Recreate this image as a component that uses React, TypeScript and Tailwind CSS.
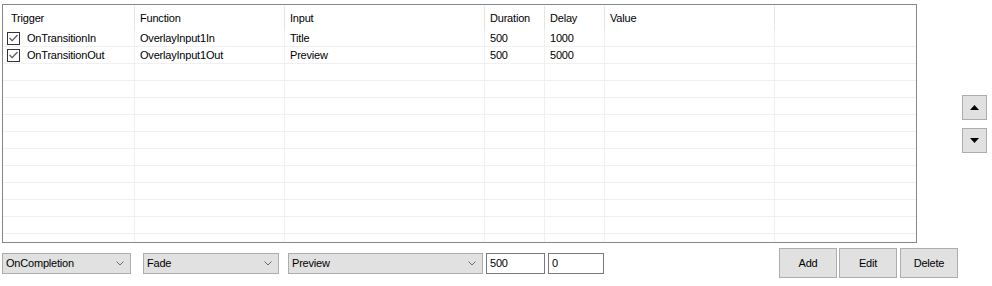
import React from "react";

type Col = { key: string; label: string; width: number };

const columns: Col[] = [
  { key: "trigger", label: "Trigger", width: 132 },
  { key: "fn", label: "Function", width: 150 },
  { key: "input", label: "Input", width: 200 },
  { key: "duration", label: "Duration", width: 60 },
  { key: "delay", label: "Delay", width: 60 },
  { key: "value", label: "Value", width: 170 },
];

type Row = {
  checked: boolean;
  trigger: string;
  fn: string;
  input: string;
  duration: string;
  delay: string;
  value: string;
};

const rows: Row[] = [
  { checked: true, trigger: "OnTransitionIn", fn: "OverlayInput1In", input: "Title", duration: "500", delay: "1000", value: "" },
  { checked: true, trigger: "OnTransitionOut", fn: "OverlayInput1Out", input: "Preview", duration: "500", delay: "5000", value: "" },
];

const EMPTY_ROWS = 11;

function Check() {
  return (
    <span className="grid size-[13px] shrink-0 place-items-center border border-[#333333] bg-white">
      <svg width="9" height="8" viewBox="0 0 9 8" aria-hidden>
        <path d="M0.5 4 L3.2 6.6 L8.5 1" fill="none" stroke="#5a5a5a" strokeWidth="1.3" />
      </svg>
    </span>
  );
}

function Chevron() {
  return (
    <svg width="8" height="5" viewBox="0 0 8 5" aria-hidden>
      <path d="M0.5 0.5 L4 4 L7.5 0.5" fill="none" stroke="#6b6b6b" strokeWidth="1" />
    </svg>
  );
}

function Combo({ label, width }: { label: string; width: number }) {
  return (
    <div
      className="flex h-[21px] items-center justify-between border border-[#adadad] bg-[#e1e1e1] pl-[3px] pr-[6px] text-black"
      style={{ width }}
    >
      <span>{label}</span>
      <Chevron />
    </div>
  );
}

function TextBox({ value, width }: { value: string; width: number }) {
  return (
    <div
      className="flex h-[21px] items-center border border-[#7a7a7a] bg-white pl-[3px] text-black"
      style={{ width }}
    >
      {value}
    </div>
  );
}

function Button({ children, width }: { children: React.ReactNode; width: number }) {
  return (
    <button
      type="button"
      className="grid h-[30px] place-items-center border border-[#adadad] bg-[#e1e1e1] text-black"
      style={{ width }}
    >
      {children}
    </button>
  );
}

function ArrowButton({ up }: { up?: boolean }) {
  return (
    <button
      type="button"
      className="grid size-[25px] place-items-center border border-[#adadad] bg-[#e1e1e1]"
    >
      <svg width="9" height="5" viewBox="0 0 9 5" aria-hidden>
        {up ? <path d="M0 5 L4.5 0 L9 5 Z" fill="#000" /> : <path d="M0 0 L9 0 L4.5 5 Z" fill="#000" />}
      </svg>
    </button>
  );
}

export default function App() {
  return (
    <div
      className="h-[286px] w-[992px] overflow-hidden bg-white text-[11px] leading-none tracking-[-0.2px] text-black"
      style={{ fontFamily: '"Liberation Sans", Arial, sans-serif' }}
    >
      <div className="flex pt-[4px]">
        <div className="ml-[2px] h-[239px] w-[915px] overflow-hidden border border-[#828790] bg-white">
          <div className="flex h-[25px]">
            {columns.map((c, i) => (
              <div
                key={c.key}
                className={`flex shrink-0 items-center border-r border-[#e5e5e5] ${i === 0 ? "pl-[8px]" : "pl-[5px]"}`}
                style={{ width: c.width, marginTop: 1 }}
              >
                {c.label}
              </div>
            ))}
            <div className="flex-1" />
          </div>
          {rows.map((r, idx) => (
            <div key={idx} className="flex h-[17px] border-b border-[#f0f0f0]">
              <div className="flex shrink-0 items-center gap-[7px] border-r border-[#f0f0f0] pl-[4px]" style={{ width: 132 }}>
                <Check />
                <span>{r.trigger}</span>
              </div>
              {columns.slice(1).map((c) => (
                <div
                  key={c.key}
                  className="flex shrink-0 items-center border-r border-[#f0f0f0] pl-[5px]"
                  style={{ width: c.width }}
                >
                  {r[c.key as keyof Row] as string}
                </div>
              ))}
              <div className="flex-1" />
            </div>
          ))}
          {Array.from({ length: EMPTY_ROWS }).map((_, idx) => (
            <div key={idx} className="flex h-[17px] border-b border-[#f0f0f0]">
              {columns.map((c) => (
                <div key={c.key} className="shrink-0 border-r border-[#f0f0f0]" style={{ width: c.width }} />
              ))}
              <div className="flex-1" />
            </div>
          ))}
        </div>
        <div className="ml-[45px] flex flex-col gap-[8px] pt-[91px]">
          <ArrowButton up />
          <ArrowButton />
        </div>
      </div>

      <div className="mt-[5px] flex items-start">
        <div className="ml-[2px] mt-[5px] flex items-center">
          <Combo label="OnCompletion" width={129} />
          <div className="ml-[12px]">
            <Combo label="Fade" width={136} />
          </div>
          <div className="ml-[9px]">
            <Combo label="Preview" width={195} />
          </div>
          <div className="ml-[3px]">
            <TextBox value="500" width={59} />
          </div>
          <div className="ml-[3px]">
            <TextBox value="0" width={56} />
          </div>
        </div>
        <div className="ml-[175px] flex gap-[2px]">
          <Button width={58}>Add</Button>
          <Button width={58}>Edit</Button>
          <div className="ml-[1px]">
            <Button width={58}>Delete</Button>
          </div>
        </div>
      </div>
    </div>
  );
}
